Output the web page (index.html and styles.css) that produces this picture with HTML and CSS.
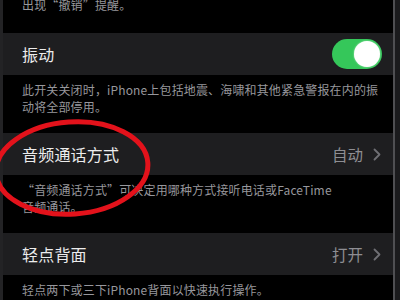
FILE: index.html
```html
<!DOCTYPE html>
<html lang="zh-CN">
<head>
    <meta charset="UTF-8">
    <meta name="viewport" content="width=device-width, initial-scale=1.0">
    <title>声音与触感</title>
    <link rel="stylesheet" href="styles.css">
</head>
<body>
    <div class="screen">
        <div class="edge-left"></div>

        <div class="settings">
            <!-- previous group footer, cut off at the top -->
            <div class="note note-top">
                <p>出现“撤销”提醒。</p>
            </div>

            <div class="row">
                <span class="title">振动</span>
                <span class="switch on"><span class="knob"></span></span>
            </div>
            <div class="note">
                <p>此开关关闭时，iPhone上包括地震、海啸和其他紧急警报在内的振<br>动将全部停用。</p>
            </div>

            <div class="row">
                <span class="title">音频通话方式</span>
                <span class="value">自动
                    <svg class="chevron" width="8" height="13" viewBox="0 0 8 13"><polyline points="1.5,1.5 6.5,6.5 1.5,11.5" /></svg>
                </span>
            </div>
            <div class="note">
                <p>“音频通话方式”可决定用哪种方式接听电话或FaceTime<br>音频通话。</p>
            </div>

            <div class="row">
                <span class="title">轻点背面</span>
                <span class="value">打开
                    <svg class="chevron" width="8" height="13" viewBox="0 0 8 13"><polyline points="1.5,1.5 6.5,6.5 1.5,11.5" /></svg>
                </span>
            </div>
            <div class="note">
                <p>轻点两下或三下iPhone背面以快速执行操作。</p>
            </div>
        </div>

        <div class="edge-right"></div>

        <!-- hand-drawn red mark over the screenshot -->
        <svg class="mark" width="400" height="300" viewBox="0 0 400 300">
            <ellipse cx="72" cy="168" rx="76" ry="46" transform="rotate(-4 72 168)" />
        </svg>
    </div>
</body>
</html>
```

FILE: styles.css
```css
body{
    margin: 0;
    background: #000;
    font-family: "Noto Sans CJK SC", "Noto Sans", sans-serif;
}
.screen{
    position: relative;
    width: 400px;
    height: 300px;
    display: flex;
    overflow: hidden;
}
.edge-left{
    width: 3px;
    background: #232325;
}
.edge-right{
    width: 5px;
    border-left: 2px solid #4f4f52;
    background: #1b1b1d;
}
.settings{
    flex: 1;
    display: flex;
    flex-direction: column;
}
.note{
    flex-shrink: 0;
    box-sizing: border-box;
    height: 60px;
    padding: 7px 12px 0 19px;
    color: #97979c;
    font-size: 12px;
    line-height: 16.5px;
    letter-spacing: 0.15px;
}
.note p{
    margin: 0;
    white-space: nowrap;
}
.note-top{
    height: 33px;
    padding-top: 0;
}
.note-top p{
    margin-top: -3px;
}
.row{
    flex-shrink: 0;
    height: 42px;
    background: #1e1e20;
    display: flex;
    align-items: center;
    justify-content: space-between;
    padding: 0 11px 0 19px;
}
.note + .row + .note{
    height: 58px;
}
.title{
    color: #ececec;
    font-size: 16px;
    letter-spacing: 0.2px;
}
.value{
    color: #8e8e93;
    font-size: 15.5px;
    display: flex;
    align-items: center;
    gap: 10px;
    padding-right: 1px;
}
.chevron polyline{
    fill: none;
    stroke: #6f6f74;
    stroke-width: 1.8;
    stroke-linecap: round;
    stroke-linejoin: round;
}
.switch{
    width: 50px;
    height: 30px;
    border-radius: 15px;
    background: #35c75a;
    display: flex;
    align-items: center;
    justify-content: flex-end;
    padding: 0 2px;
    box-sizing: border-box;
}
.knob{
    width: 26px;
    height: 26px;
    border-radius: 50%;
    background: #fff;
    box-shadow: 0 0 2px rgba(255,255,255,0.6);
}
.mark{
    position: absolute;
    left: 0;
    top: 0;
    pointer-events: none;
}
.mark ellipse{
    fill: none;
    stroke: #e3121b;
    stroke-width: 5;
}
```
